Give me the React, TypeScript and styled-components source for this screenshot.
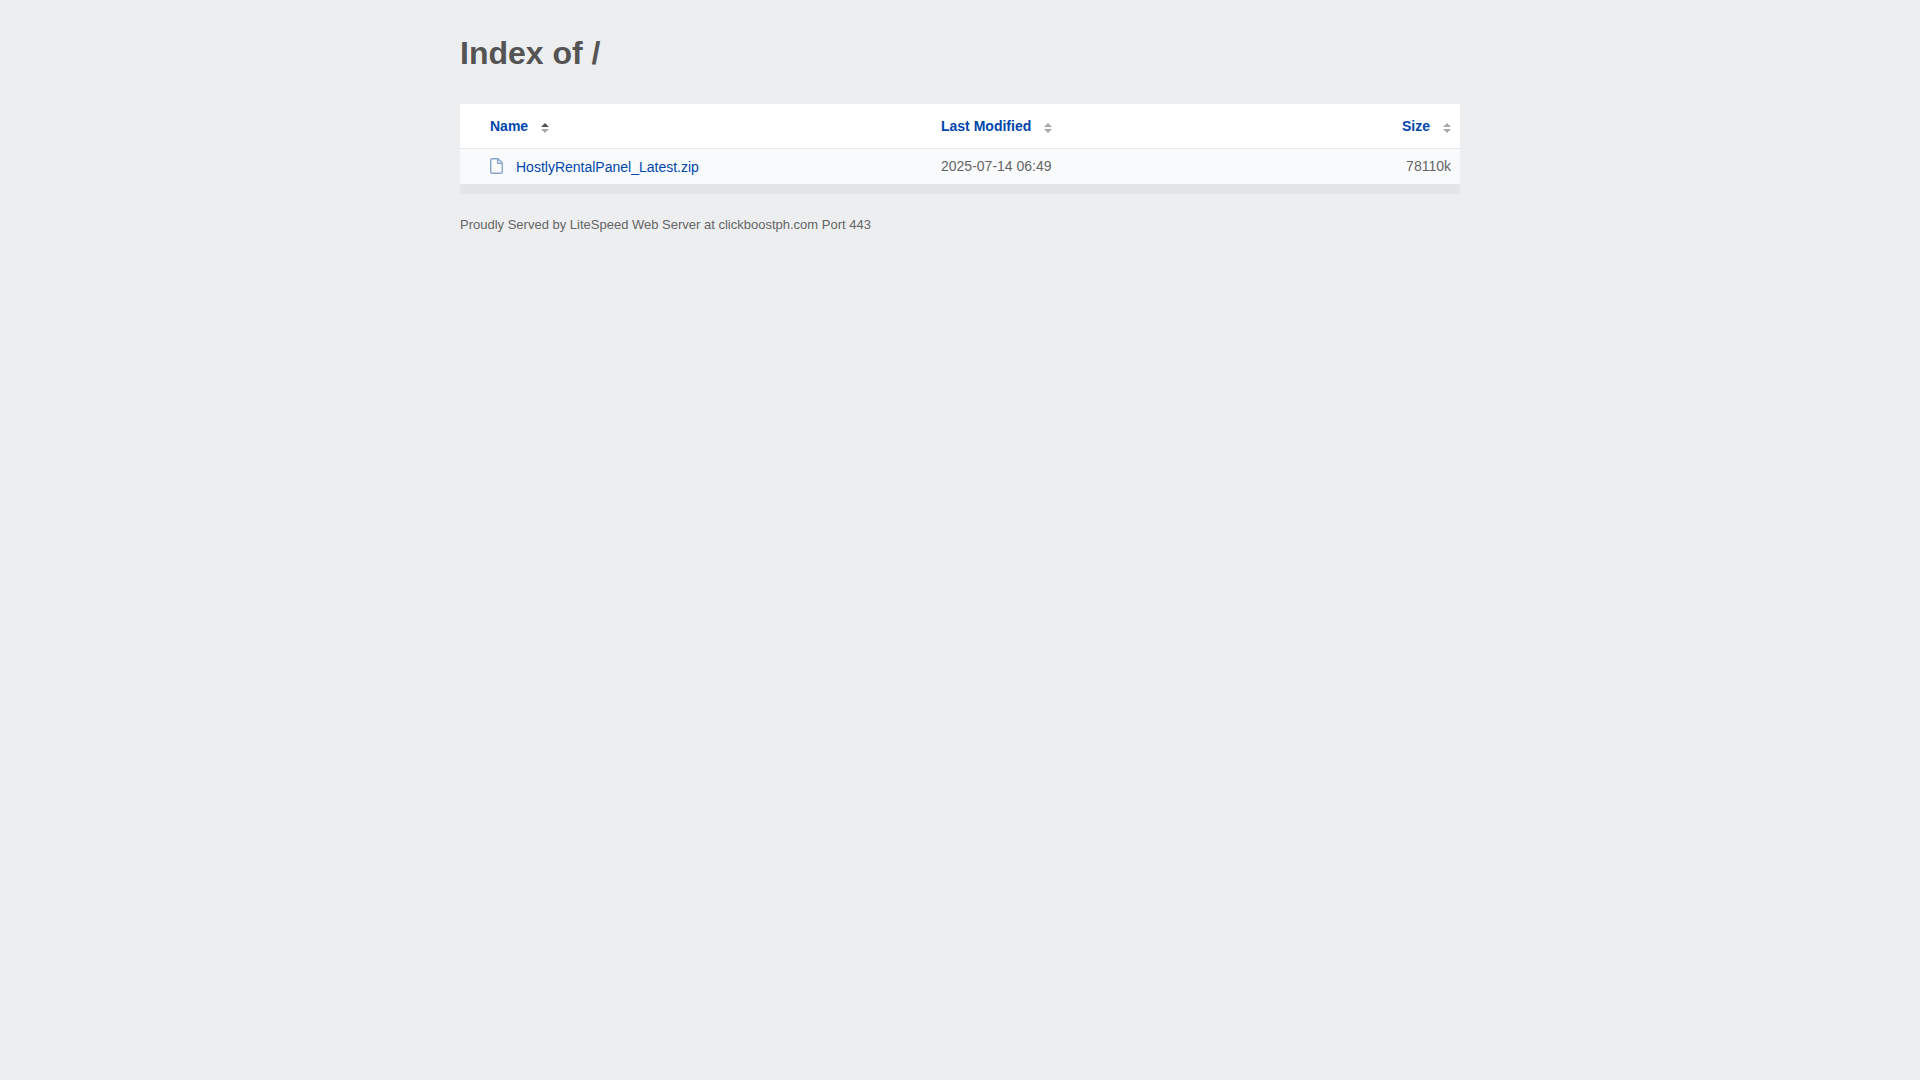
import React from 'react';
import styled, { createGlobalStyle } from 'styled-components';

const GlobalStyle = createGlobalStyle`
  body {
    margin: 0;
    background: #edeef0;
    color: #656565;
    font-family: "Liberation Sans", Arial, sans-serif;
    font-size: 14px;
    line-height: 20px;
    text-rendering: optimizeSpeed;
  }
`;

const Page = styled.main`
  box-sizing: border-box;
  max-width: 1040px;
  margin: 0 auto;
  padding: 32px 20px;
`;

const Title = styled.h1`
  margin: 0 0 30px;
  color: #545454;
  font-size: 32px;
  line-height: 42px;
`;

const Listing = styled.table`
  width: 100%;
  border-collapse: collapse;
  border-bottom: 10px solid #e3e6e9;
  background: #f9fafc;
`;

const HeadCell = styled.th<{ $align?: string; $width?: string }>`
  width: ${(p) => p.$width};
  padding: 12px 9px;
  border-bottom: 1px solid #e8eaed;
  background: #fff;
  text-align: ${(p) => p.$align ?? 'left'};

  &:first-child {
    padding-left: 30px;
  }
`;

const Cell = styled.td<{ $align?: string }>`
  padding: 8px 9px 7px;
  line-height: 18px;
  vertical-align: top;
  text-align: ${(p) => p.$align ?? 'left'};

  &:first-child {
    padding-left: 30px;
  }
`;

const SortLink = styled.a`
  display: inline-flex;
  align-items: center;
  gap: 13px;
  color: #0046ad;
  text-decoration: none;
`;

const SortMark = styled.svg`
  display: block;
  width: 8px;
  height: 10px;
  margin-top: 4px;
`;

const FileLink = styled.a`
  display: flex;
  align-items: center;
  gap: 13px;
  line-height: 20px;
  color: #0046ad;
  text-decoration: none;
`;

const FileMark = styled.svg`
  display: block;
  width: 13px;
  height: 16px;
  margin-bottom: 2px;
`;

const Footer = styled.footer`
  margin-top: 21px;
  font-size: 13px;
`;

function SortIcon({ ascending = false }: { ascending?: boolean }) {
  return (
    <SortMark viewBox="0 0 8 10" aria-hidden="true">
      <path d="M0 4 4 0l4 4z" fill={ascending ? '#545454' : '#a9a9a9'} />
      <path d="M0 6h8l-4 4z" fill="#a9a9a9" />
    </SortMark>
  );
}

function FileIcon() {
  return (
    <FileMark viewBox="0 0 13 16" fill="none" stroke="#89a5cc" strokeWidth="1.4" strokeLinejoin="round" aria-hidden="true">
      <path d="M2 .7h6l4.3 4.4v9a1.2 1.2 0 0 1-1.2 1.2H2A1.3 1.3 0 0 1 .7 14V2A1.3 1.3 0 0 1 2 .7z" />
      <path d="M7.7 1v4.4h4.4" />
    </FileMark>
  );
}

const files = [{ name: 'HostlyRentalPanel_Latest.zip', modified: '2025-07-14 06:49', size: '78110k' }];

export default function App() {
  return (
    <>
      <GlobalStyle />
      <Page>
        <Title>Index of /</Title>
        <Listing>
          <thead>
            <tr>
              <HeadCell $width="433px" aria-sort="ascending"><SortLink href="#name">Name<SortIcon ascending /></SortLink></HeadCell>
              <HeadCell><SortLink href="#modified">Last Modified<SortIcon /></SortLink></HeadCell>
              <HeadCell $align="right"><SortLink href="#size">Size<SortIcon /></SortLink></HeadCell>
            </tr>
          </thead>
          <tbody>
            {files.map((file) => (
              <tr key={file.name}>
                <Cell><FileLink href={`#${file.name}`}><FileIcon />{file.name}</FileLink></Cell>
                <Cell>{file.modified}</Cell>
                <Cell $align="right">{file.size}</Cell>
              </tr>
            ))}
          </tbody>
        </Listing>
        <Footer>Proudly Served by LiteSpeed Web Server at clickboostph.com Port 443</Footer>
      </Page>
    </>
  );
}
